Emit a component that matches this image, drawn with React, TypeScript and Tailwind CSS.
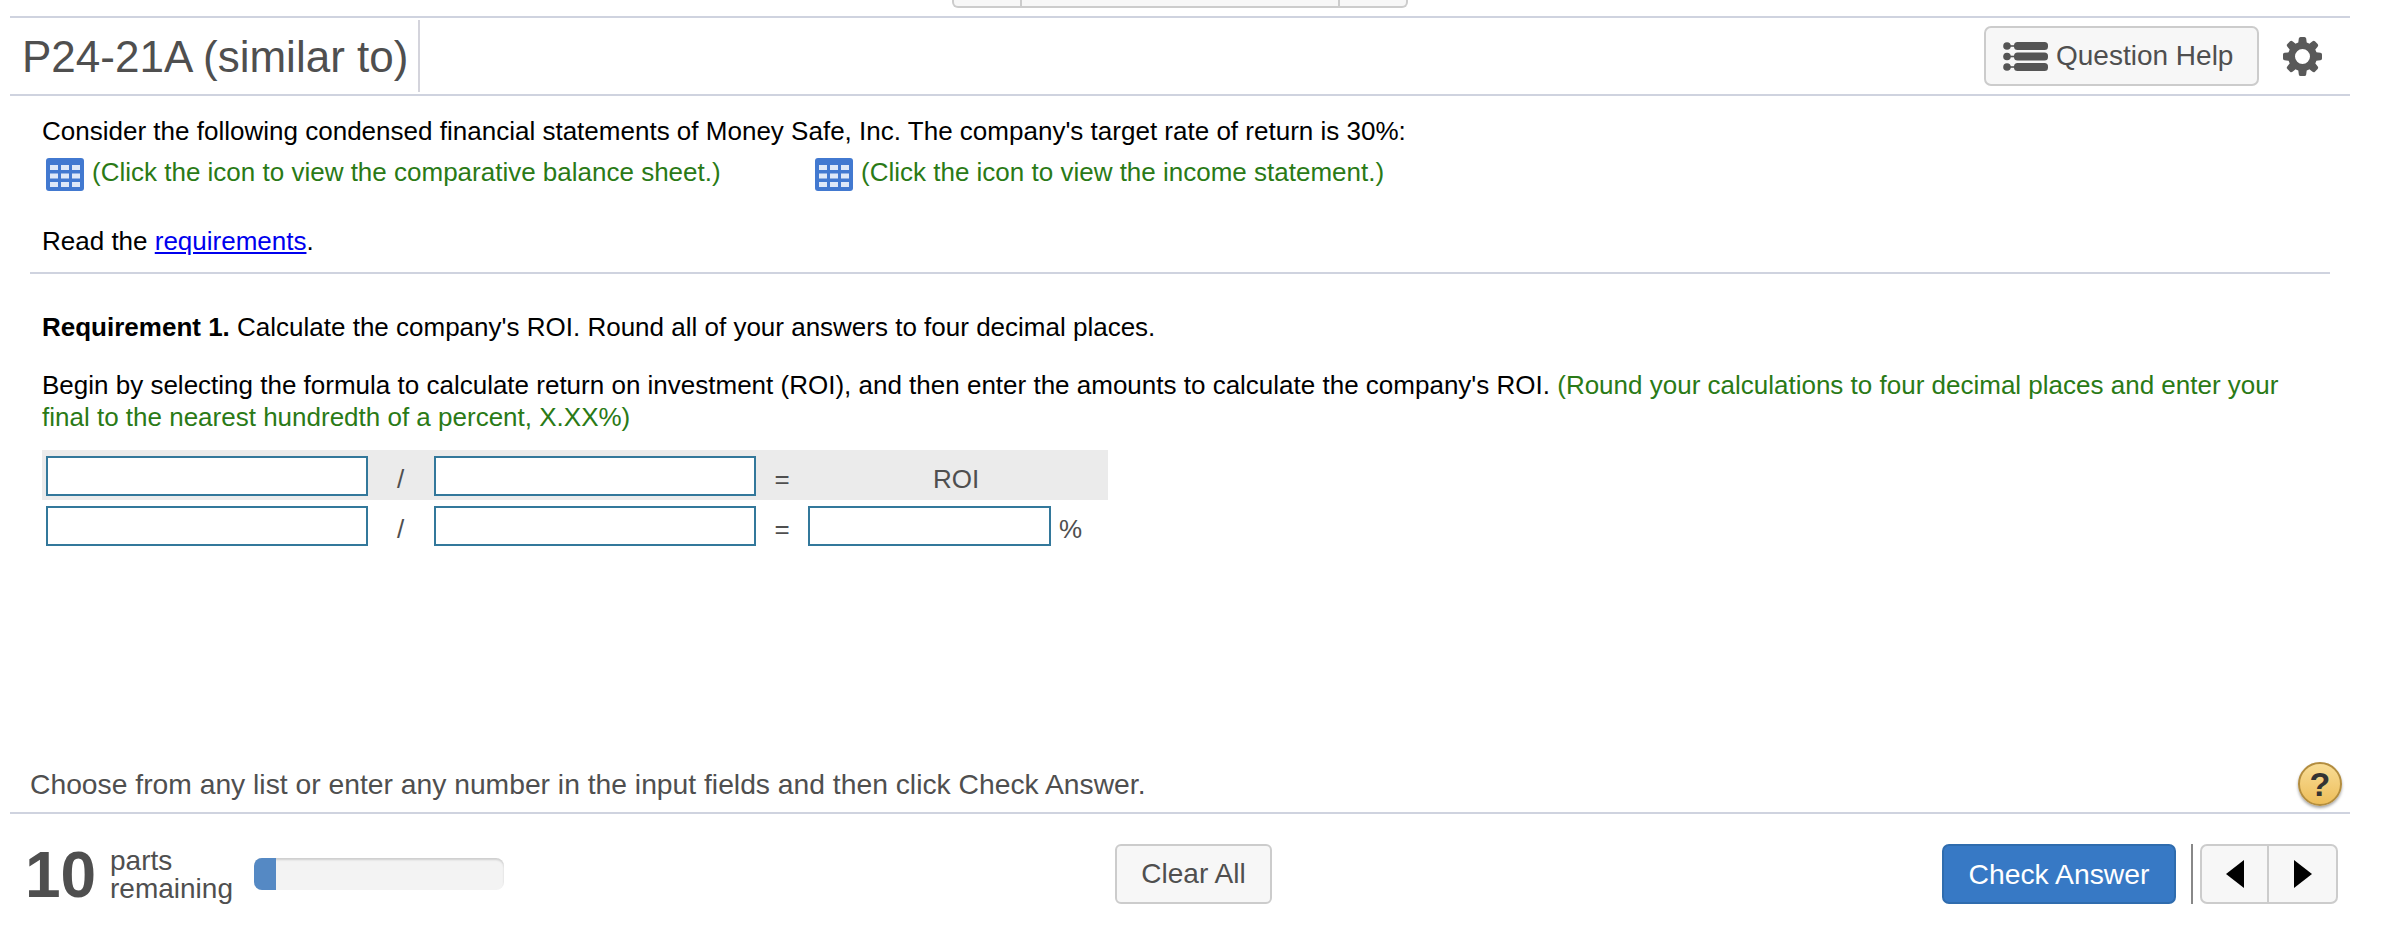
import React from "react";

function ListIcon() {
  return (
    <svg width="45" height="29" viewBox="0 0 45 29" className="shrink-0">
      {[0, 10.5, 21].map((y) => (
        <g key={y} fill="#555555">
          <circle cx="4" cy={y + 4} r="3.8" />
          <rect x="3" y={y + 3.2} width="10" height="1.6" />
          <rect x="11" y={y} width="34" height="8" rx="3.5" />
        </g>
      ))}
    </svg>
  );
}

function GearIcon() {
  return (
    <svg width="39" height="39" viewBox="0 0 39 39" className="ml-[24px] shrink-0">
      {[0, 45, 90, 135, 180, 225, 270, 315].map((a) => (
        <path key={a} d="M15 8 L15.8 1.6 Q16 0 17.6 0 L21.4 0 Q23 0 23.2 1.6 L24 8 Z" fill="#595959" transform={`rotate(${a} 19.5 19.5)`} />
      ))}
      <circle cx="19.5" cy="19.5" r="11" fill="none" stroke="#595959" strokeWidth="7" />
    </svg>
  );
}

function GridIcon() {
  const xs = [4, 15, 26];
  const ys = [7, 15.5, 24];
  return (
    <svg width="38" height="33" viewBox="0 0 38 33" className="shrink-0">
      <rect x="0" y="0" width="38" height="33" rx="3" fill="#4279d0" />
      {ys.map((y) =>
        xs.map((x) => <rect key={`${x}-${y}`} x={x} y={y} width="8" height="5" fill="#dfe9f8" />)
      )}
    </svg>
  );
}

function Field({ w }: { w: string }) {
  return <div className={`${w} h-[40px] bg-white border-2 border-[#33789b] shrink-0`} />;
}

export default function App() {
  return (
    <div className="w-[2408px] h-[930px] bg-white overflow-hidden font-['Liberation_Sans',Arial,sans-serif] text-[#000]">
      <div className="ml-[10px] w-[2340px] h-[930px] flex flex-col">
        {/* top strip */}
        <div className="h-[18px] border-b-2 border-[#cfd3df] flex justify-center shrink-0">
          <div className="w-[456px] h-[8px] bg-[#f7f7f7] border-2 border-t-0 border-[#cccccc] rounded-b-[6px] flex">
            <div className="w-[68px] border-r-2 border-[#cccccc]" />
            <div className="w-[318px] border-r-2 border-[#cccccc]" />
          </div>
        </div>

        {/* header */}
        <div className="h-[78px] border-b-2 border-[#cfd3df] flex items-center shrink-0">
          <h1 className="ml-[12px] w-[396px] pt-[2px] text-[44px] leading-[56px] text-[#4f4f4f] font-normal">P24-21A (similar to)</h1>
          <div className="w-[2px] h-[72px] bg-[#d4d4dc]" />
          <div className="ml-auto mr-[28px] flex items-center">
            <button className="w-[275px] h-[60px] bg-[#f7f7f7] border-2 border-[#cccccc] rounded-[7px] pl-[17px] flex items-center gap-[8px] text-[28px] text-[#4f4f4f]">
              <ListIcon />
              <span>Question Help</span>
            </button>
            <GearIcon />
          </div>
        </div>

        {/* body */}
        <div className="flex-1 min-h-0">
          <div className="pl-[32px] text-[26px] leading-[32px]">
            <p className="mt-[19px] text-[26.03px]">
              Consider the following condensed financial statements of Money Safe, Inc. The company's target rate of return is 30%:
            </p>
            <div className="mt-[11px] h-[33px] flex items-center text-[#2a7a16] pl-[4px]">
              <div className="w-[769px] flex items-center gap-[8px]">
                <GridIcon />
                <span className="pb-[6px]">(Click the icon to view the comparative balance sheet.)</span>
              </div>
              <div className="flex items-center gap-[8px]">
                <GridIcon />
                <span className="pb-[6px]">(Click the icon to view the income statement.)</span>
              </div>
            </div>
            <p className="mt-[34px]">
              Read the <a className="text-[#0000ee] underline">requirements</a>.
            </p>
          </div>

          <div className="ml-[20px] w-[2300px] h-[2px] bg-[#cfd3df] mt-[15px]" />

          <div className="pl-[32px] text-[26px] leading-[32px]">
            <p className="mt-[37px]">
              <b>Requirement 1.</b> Calculate the company's ROI. Round all of your answers to four decimal places.
            </p>
            <p className="mt-[26px]">
              Begin by selecting the formula to calculate return on investment (ROI), and then enter the amounts to calculate the company's ROI.{" "}
              <span className="text-[#2a7a16]">
                (Round your calculations to four decimal places and enter your
                <br />
                final to the nearest hundredth of a percent, X.XX%)
              </span>
            </p>

            <div className="mt-[17px] text-[#4f4f4f]">
              <div className="w-[1066px] h-[50px] bg-[#ebebeb] flex items-start pt-[6px] pl-[4px]">
                <Field w="w-[322px]" />
                <div className="w-[66px] pt-[7px] pr-[1px] text-center">/</div>
                <Field w="w-[322px]" />
                <div className="w-[52px] pt-[7px] text-center">=</div>
                <div className="w-[296px] pt-[7px] text-center">ROI</div>
              </div>
              <div className="w-[1066px] h-[40px] mt-[6px] flex items-start pl-[4px]">
                <Field w="w-[322px]" />
                <div className="w-[66px] pt-[7px] pr-[1px] text-center">/</div>
                <Field w="w-[322px]" />
                <div className="w-[52px] pt-[7px] text-center">=</div>
                <Field w="w-[243px]" />
                <div className="ml-[8px] pt-[7px]">%</div>
              </div>
            </div>
          </div>
        </div>

        {/* footer message */}
        <div className="h-[46px] pb-[2px] flex items-center justify-between pl-[20px] pr-[8px] text-[28.28px] text-[#4f4f4f] shrink-0">
          <span>Choose from any list or enter any number in the input fields and then click Check Answer.</span>
          <div className="w-[44px] h-[44px] rounded-full border-2 border-[#b38d3f] bg-gradient-to-b from-[#f8dc94] to-[#edbe5a] shadow-[0_2px_3px_rgba(0,0,0,0.35)] flex items-center justify-center text-[34px] font-bold text-[#333333] leading-none">
            ?
          </div>
        </div>
        <div className="h-[2px] bg-[#cfd3df] mt-[4px] shrink-0" />

        {/* bottom bar */}
        <div className="h-[116px] pt-[30px] pl-[15px] flex items-start shrink-0 text-[#4f4f4f]">
          <div className="w-[85px] h-[60px] pt-[2px] flex items-center text-[64px] leading-none font-bold">10</div>
          <div className="w-[144px] h-[60px] text-[28px] leading-[28px] pt-[3px]">
            <div>parts</div>
            <div>remaining</div>
          </div>
          <div className="w-[250px] h-[32px] mt-[14px] bg-[#f3f3f3] rounded-[8px] overflow-hidden shadow-[inset_0_2px_2px_rgba(0,0,0,0.15)]">
            <div className="w-[22px] h-full bg-[#5589c4]" />
          </div>
          <button className="ml-[611px] w-[157px] h-[60px] bg-[#f7f7f7] border-2 border-[#cccccc] rounded-[6px] text-[28px] text-[#4f4f4f]">
            Clear All
          </button>
          <button className="ml-[670px] w-[234px] h-[60px] bg-[#3779c5] border-2 border-[#2f6cae] rounded-[7px] text-[28.3px] text-white">
            Check Answer
          </button>
          <div className="ml-[15px] w-[2px] h-[60px] bg-[#888888]" />
          <div className="ml-[7px] w-[138px] h-[60px] bg-[#f7f7f7] border-2 border-[#cccccc] rounded-[7px] flex">
            <div className="w-[67px] border-r-2 border-[#cccccc] flex items-center justify-center">
              <svg width="18" height="28" viewBox="0 0 18 28"><polygon points="18,0 18,28 0,14" fill="#000" /></svg>
            </div>
            <div className="flex-1 flex items-center justify-center">
              <svg width="18" height="28" viewBox="0 0 18 28"><polygon points="0,0 0,28 18,14" fill="#000" /></svg>
            </div>
          </div>
        </div>
      </div>
    </div>
  );
}
